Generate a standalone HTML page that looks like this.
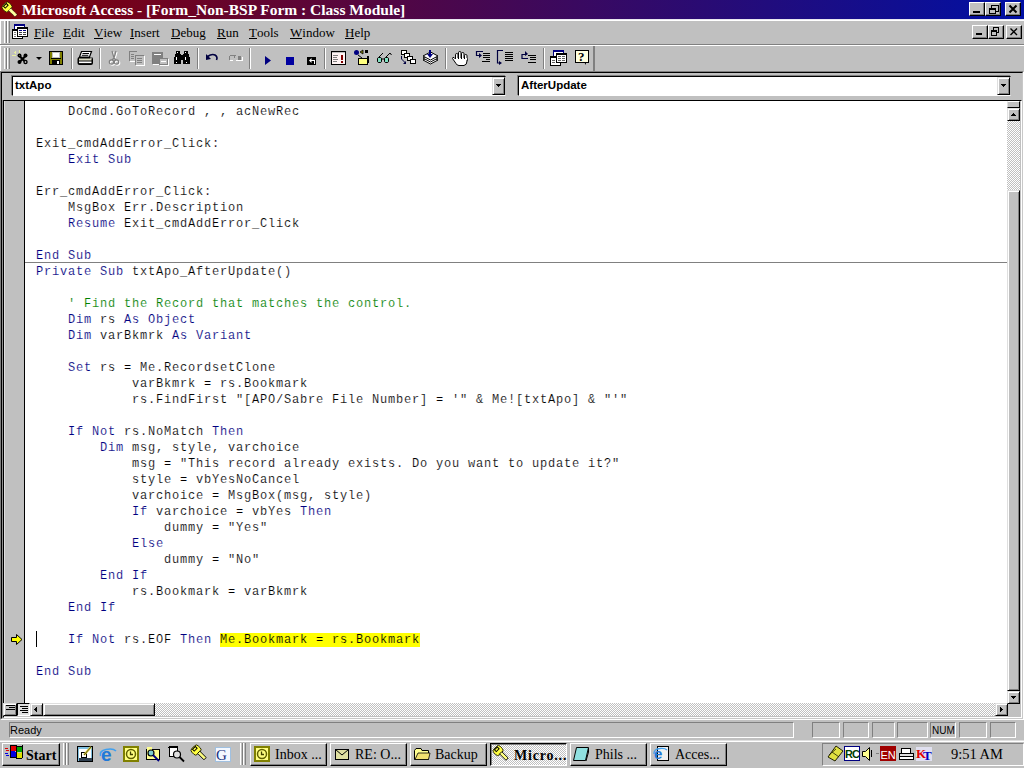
<!DOCTYPE html>
<html><head><meta charset="utf-8">
<style>
*{margin:0;padding:0;box-sizing:border-box}
html,body{width:1024px;height:768px;overflow:hidden;background:#c0c0c0;position:relative;font-family:"Liberation Serif",serif}
.a{position:absolute}
#title{left:0;top:0;width:1024px;height:19px;background:linear-gradient(90deg,#840008 0%,#0010a4 100%)}
#ttext{left:22px;top:1px;color:#fff;font-weight:bold;font-size:15.5px;white-space:nowrap;line-height:17px}
.tb{width:16px;height:14px;background:#c0c0c0;border-top:1px solid #fff;border-left:1px solid #fff;border-right:1px solid #000;border-bottom:1px solid #000;box-shadow:inset -1px -1px 0 #808080}
#menubar{left:0;top:19px;width:1024px;height:27px;border-top:1px solid #e8e8f0;border-bottom:1px solid #fff;box-shadow:inset 0 1px 0 #fff}
#menubar .line{left:0;top:24px;width:1024px;height:1px;background:#808080}
.menu{top:4px;font-size:13px;line-height:15px;color:#000;white-space:nowrap;margin-top:1px}
.menu u{text-decoration:none;border-bottom:1px solid #000;display:inline-block;line-height:11px}
#toolbar{left:0;top:46px;width:595px;height:25px;border-left:1px solid #fff;border-right:1px solid #808080}
.sep{top:3px;width:2px;height:20px;border-left:1px solid #808080;border-right:1px solid #fff}
.grip{top:2px;width:3px;height:21px;border-left:1px solid #fff;border-right:1px solid #808080}
#mdi{left:0;top:71px;width:1024px;height:649px;border-top:1px solid #808080;border-left:1px solid #808080;border-right:1px solid #fff;border-bottom:1px solid #fff}
.combo{height:20px;background:#fff;border-top:1px solid #000;border-left:1px solid #000;border-bottom:1px solid #fff;border-right:1px solid #c0c0c0;box-shadow:-1px -1px 0 #808080}
.combo span{position:absolute;left:2px;top:2px;font-family:"Liberation Sans",sans-serif;font-weight:bold;font-size:11.5px;line-height:13px}
.ddb{top:0px;width:13px;height:18px;background:#c0c0c0;border-top:1px solid #dfdfdf;border-left:1px solid #dfdfdf;border-right:1px solid #000;border-bottom:1px solid #000;box-shadow:inset 1px 1px 0 #fff,inset -1px -1px 0 #808080}
.ddb:after{content:"";position:absolute;left:3px;top:6px;width:1px;height:1px;background:#000;box-shadow:1px 0 #000,2px 0 #000,3px 0 #000,4px 0 #000,1px 1px #000,2px 1px #000,3px 1px #000,2px 2px #000}
.ad{position:absolute;width:1px;height:1px;background:#000;box-shadow:1px 0 #000,2px 0 #000,3px 0 #000,4px 0 #000,1px 1px #000,2px 1px #000,3px 1px #000,2px 2px #000}
.au{position:absolute;width:1px;height:1px;background:#000;box-shadow:1px 0 #000,2px 0 #000,3px 0 #000,4px 0 #000,1px -1px #000,2px -1px #000,3px -1px #000,2px -2px #000}
.al{position:absolute;width:1px;height:1px;background:#000;box-shadow:1px -1px #000,1px 0 #000,1px 1px #000,2px -2px #000,2px -1px #000,2px 0 #000,2px 1px #000,2px 2px #000}
.ar{position:absolute;width:1px;height:1px;background:#000;box-shadow:0 -2px #000,0 -1px #000,0 1px #000,0 2px #000,1px -1px #000,1px 0 #000,1px 1px #000,2px 0 #000}
#code{left:3px;top:100px;width:1019px;height:618px;background:#fff;border-top:1px solid #000;border-left:1px solid #000;border-right:1px solid #fff;border-bottom:1px solid #fff;box-shadow:inset -1px -1px 0 #c0c0c0}
#margin{left:4px;top:101px;width:21px;height:602px;background:#c0c0c0;border-left:1px solid #dfdfdf;border-right:1px solid #000}
#lines{left:36px;top:104px;font-family:"Liberation Mono",monospace;font-size:12px;letter-spacing:0.8px;line-height:16px;white-space:pre;color:#000}
.k{color:#000080}.c{color:#008000}.hl{background:#ffff00;-webkit-text-stroke:0.15px #ffff00}
#lines{-webkit-text-stroke:0.15px #fff}
.dither{background-color:#fff;background-image:linear-gradient(45deg,#c0c0c0 25%,transparent 25%,transparent 75%,#c0c0c0 75%),linear-gradient(45deg,#c0c0c0 25%,transparent 25%,transparent 75%,#c0c0c0 75%);background-size:2px 2px;background-position:0 0,1px 1px}
.sbtn{background:#c0c0c0;border-top:1px solid #dfdfdf;border-left:1px solid #dfdfdf;border-right:1px solid #000;border-bottom:1px solid #000;box-shadow:inset 1px 1px 0 #fff,inset -1px -1px 0 #808080}
.btn{background:#c0c0c0;border-top:1px solid #fff;border-left:1px solid #fff;border-right:1px solid #000;border-bottom:1px solid #000;box-shadow:inset -1px -1px 0 #808080}
.sp{height:16px;top:722px;border-top:1px solid #808080;border-left:1px solid #808080;border-right:1px solid #fff;border-bottom:1px solid #fff}
.sp span{position:absolute;left:0px;top:1px;font-family:"Liberation Sans",sans-serif;font-size:11px;line-height:13px}
#taskbar{left:0;top:740px;width:1024px;height:28px;border-top:1px solid #dfdfdf;box-shadow:inset 0 1px 0 #fff}
.task{top:743px;width:77px;height:23px}
.task span{position:absolute;left:24px;top:3px;font-size:14px;line-height:16px;white-space:nowrap}
.task svg{position:absolute;left:4px;top:2px}
</style></head><body>
<!-- title bar -->
<div id="title" class="a"></div>
<svg class="a" style="left:1px;top:1px" width="18" height="17"><g transform="translate(0,0.5) rotate(-45 8.5 8)"><rect x="4" y="0.5" width="9" height="8" rx="2.5" fill="#ffff40" stroke="#202000" stroke-width="0.8"/><rect x="6.5" y="1.5" width="4" height="2.5" fill="none" stroke="#000" stroke-width="1"/><rect x="7.2" y="8" width="3.2" height="9" fill="#ffffa0" stroke="#000" stroke-width="0.8" stroke-dasharray="1 1"/></g></svg>
<div id="ttext" class="a">Microsoft Access - [Form_Non-BSP Form : Class Module]</div>
<div class="a tb" style="left:969px;top:2px"></div>
<div class="a tb" style="left:985px;top:2px"></div>
<div class="a tb" style="left:1005px;top:2px"></div>
<svg class="a" style="left:960px;top:0;z-index:5" width="64" height="44" shape-rendering="crispEdges">
<rect x="13" y="11" width="7" height="2" fill="#000"/>
<rect x="31" y="5" width="7" height="6" fill="none" stroke="#000" stroke-width="1" transform="translate(0.5,0.5)"/><rect x="31" y="5" width="7" height="1" fill="#000"/>
<rect x="29" y="8" width="7" height="6" fill="#c0c0c0"/><rect x="29.5" y="8.5" width="6" height="5" fill="none" stroke="#000" stroke-width="1"/><rect x="29" y="8" width="7" height="2" fill="#000"/>
<path d="M49.5 5.5 L56.5 12.5 M56.5 5.5 L49.5 12.5" stroke="#000" stroke-width="2" shape-rendering="auto"/>
<rect x="16" y="33" width="6" height="2" fill="#000"/>
<rect x="33.5" y="27.5" width="5" height="5" fill="none" stroke="#000" stroke-width="1"/><rect x="33" y="27" width="6" height="1" fill="#000"/>
<rect x="31" y="30" width="6" height="6" fill="#c0c0c0"/><rect x="31.5" y="30.5" width="5" height="5" fill="none" stroke="#000" stroke-width="1"/><rect x="31" y="30" width="6" height="2" fill="#000"/>
<path d="M50.5 28.5 L57 35 M57 28.5 L50.5 35" stroke="#000" stroke-width="1.4" shape-rendering="auto"/>
</svg>

<!-- menubar -->
<div id="menubar" class="a"><div class="a line"></div></div>
<div class="a menu" style="left:34px;top:24px"><u>F</u>ile</div>
<div class="a menu" style="left:63px;top:24px"><u>E</u>dit</div>
<div class="a menu" style="left:94px;top:24px"><u>V</u>iew</div>
<div class="a menu" style="left:130px;top:24px"><u>I</u>nsert</div>
<div class="a menu" style="left:171px;top:24px"><u>D</u>ebug</div>
<div class="a menu" style="left:217px;top:24px"><u>R</u>un</div>
<div class="a menu" style="left:249px;top:24px"><u>T</u>ools</div>
<div class="a menu" style="left:290px;top:24px"><u>W</u>indow</div>
<div class="a menu" style="left:345px;top:24px"><u>H</u>elp</div>
<div class="a tb" style="left:972px;top:25px"></div>
<div class="a tb" style="left:988px;top:25px"></div>
<div class="a tb" style="left:1006px;top:25px"></div>

<!-- toolbar -->
<div id="toolbar" class="a"></div>
<!--TBICONS-->
<svg class="a" style="left:0;top:0" width="1024" height="80" shape-rendering="crispEdges">
<!-- menubar grip -->
<rect x="0" y="20" width="1" height="24" fill="#fff"/>
<rect x="4" y="21" width="1" height="22" fill="#fff"/><rect x="6" y="21" width="1" height="22" fill="#808080"/>
<rect x="7" y="21" width="1" height="22" fill="#fff"/><rect x="9" y="21" width="1" height="22" fill="#808080"/>
<!-- menubar icon (windows) -->
<rect x="14" y="24" width="11" height="8" fill="#000080"/><rect x="15" y="26" width="9" height="5" fill="#fff"/>
<rect x="12" y="29" width="11" height="10" fill="#000"/><rect x="13" y="31" width="9" height="7" fill="#fff"/>
<rect x="14" y="32" width="2" height="1" fill="#808080"/><rect x="14" y="34" width="2" height="1" fill="#808080"/><rect x="14" y="36" width="2" height="1" fill="#808080"/>
<rect x="17" y="27" width="11" height="10" fill="#000"/><rect x="18" y="29" width="9" height="7" fill="#fff"/>
<rect x="19" y="30" width="3" height="1" fill="#000080"/><rect x="23" y="30" width="3" height="1" fill="#000080"/>
<rect x="19" y="32" width="3" height="1" fill="#404040"/><rect x="23" y="32" width="3" height="1" fill="#404040"/>
<rect x="19" y="34" width="3" height="1" fill="#404040"/><rect x="23" y="34" width="3" height="1" fill="#404040"/>
<!-- toolbar grip -->
<rect x="0" y="46" width="1" height="25" fill="#fff"/>
<rect x="4" y="48" width="1" height="21" fill="#fff"/><rect x="6" y="48" width="1" height="21" fill="#808080"/>
<rect x="7" y="48" width="1" height="21" fill="#fff"/><rect x="9" y="48" width="1" height="21" fill="#808080"/>
<!-- separators -->
<rect x="71" y="48" width="1" height="21" fill="#808080"/><rect x="72" y="48" width="1" height="21" fill="#fff"/>
<rect x="99" y="48" width="1" height="21" fill="#808080"/><rect x="100" y="48" width="1" height="21" fill="#fff"/>
<rect x="197" y="48" width="1" height="21" fill="#808080"/><rect x="198" y="48" width="1" height="21" fill="#fff"/>
<rect x="249" y="48" width="1" height="21" fill="#808080"/><rect x="250" y="48" width="1" height="21" fill="#fff"/>
<rect x="324" y="48" width="1" height="21" fill="#808080"/><rect x="325" y="48" width="1" height="21" fill="#fff"/>
<rect x="445" y="48" width="1" height="21" fill="#808080"/><rect x="446" y="48" width="1" height="21" fill="#fff"/>
<rect x="543" y="48" width="1" height="21" fill="#808080"/><rect x="544" y="48" width="1" height="21" fill="#fff"/>
<rect x="593" y="46" width="1" height="25" fill="#808080"/>
<!-- 1 access tools -->
<g fill="#e8f0a0"><rect x="14" y="52" width="2" height="1"/><rect x="15" y="51" width="1" height="3"/><rect x="19" y="50" width="1" height="3"/><rect x="12" y="55" width="4" height="1"/></g>
<g shape-rendering="auto"><path d="M19 55.5 L26 62.5 M26 55.5 L19 62.5" stroke="#000" stroke-width="2.2"/>
<circle cx="19.5" cy="55.5" r="2" fill="#000"/><circle cx="25.5" cy="55.5" r="2" fill="#000"/><circle cx="19.5" cy="62" r="2" fill="#000"/><circle cx="25.5" cy="62" r="2.2" fill="#000"/>
<circle cx="25.5" cy="62" r="0.8" fill="#fff"/><circle cx="19.5" cy="55.5" r="0.6" fill="#606060"/></g>
<path d="M36 57h6l-3 3z" fill="#000" shape-rendering="auto"/>
<!-- 2 save -->
<rect x="49" y="51" width="14" height="14" fill="#000"/><rect x="50" y="52" width="12" height="12" fill="#808000"/>
<rect x="52" y="52" width="8" height="6" fill="#c0c0c0"/><rect x="53" y="53" width="6" height="4" fill="#fff"/>
<rect x="52" y="60" width="8" height="4" fill="#000"/><rect x="57" y="61" width="2" height="3" fill="#fff"/>
<rect x="51" y="58" width="10" height="1" fill="#000"/>
<!-- 3 print -->
<g shape-rendering="auto"><path d="M81.5 51.5 L91.5 51.5 L89.5 57 L79.5 57 Z" fill="#fff" stroke="#000" stroke-width="1.2"/>
<path d="M82.5 53.5 h6.5 M81.8 55.3 h6.5" stroke="#000" stroke-width="1"/>
<rect x="77.5" y="57" width="15.5" height="8" rx="2" fill="#000"/>
<rect x="79" y="58.5" width="12.5" height="2" fill="#d8d8c0"/><rect x="79" y="61.5" width="12.5" height="1.6" fill="#fff"/>
<circle cx="91" cy="58" r="0.7" fill="#fff"/></g>
<!-- 5 cut disabled -->
<g shape-rendering="auto" fill="none">
<path d="M112 51 L114 58 M116 51 L114 58" stroke="#fff" stroke-width="1.2" transform="translate(1,1)"/>
<circle cx="111.5" cy="62" r="2.2" stroke="#fff" stroke-width="1.2" transform="translate(1,1)"/><circle cx="116.5" cy="62" r="2.2" stroke="#fff" stroke-width="1.2" transform="translate(1,1)"/>
<path d="M112 51 L114 58 M116 51 L114 58 M114 58 L112 60 M114 58 L116 60" stroke="#808080" stroke-width="1.2"/>
<circle cx="111.5" cy="62" r="2.2" stroke="#808080" stroke-width="1.2"/><circle cx="116.5" cy="62" r="2.2" stroke="#808080" stroke-width="1.2"/>
</g>
<!-- 6 copy disabled -->
<g fill="#808080"><rect x="129" y="51" width="8" height="1"/><rect x="129" y="51" width="1" height="10"/><rect x="131" y="54" width="3" height="1"/><rect x="131" y="56" width="3" height="1"/><rect x="131" y="58" width="3" height="1"/>
<rect x="135" y="55" width="9" height="1"/><rect x="135" y="55" width="1" height="10"/><rect x="137" y="58" width="5" height="1"/><rect x="137" y="60" width="5" height="1"/><rect x="137" y="62" width="5" height="1"/></g>
<g fill="#fff"><rect x="130" y="61" width="5" height="1"/><rect x="136" y="65" width="9" height="1"/><rect x="144" y="56" width="1" height="9"/></g>
<!-- 7 paste disabled -->
<rect x="152" y="52" width="11" height="12" fill="#808080"/><rect x="154" y="54" width="7" height="1" fill="#fff"/>
<rect x="159" y="58" width="9" height="7" fill="#808080"/><rect x="160" y="59" width="7" height="5" fill="#c0c0c0"/><rect x="161" y="61" width="5" height="1" fill="#fff"/>
<rect x="153" y="64" width="6" height="1" fill="#fff"/><rect x="160" y="65" width="9" height="1" fill="#fff"/><rect x="168" y="59" width="1" height="6" fill="#fff"/>
<!-- 8 find -->
<g fill="#000"><rect x="176" y="51" width="4" height="3"/><rect x="184" y="51" width="4" height="3"/><rect x="175" y="54" width="6" height="4"/><rect x="183" y="54" width="6" height="4"/>
<rect x="174" y="57" width="7" height="7"/><rect x="183" y="57" width="7" height="7"/><rect x="181" y="55" width="2" height="5"/></g>
<g fill="#fff"><rect x="177" y="52" width="1" height="1"/><rect x="185" y="52" width="1" height="1"/><rect x="176" y="57" width="1" height="3"/><rect x="185" y="57" width="1" height="3"/><rect x="176" y="62" width="1" height="1"/><rect x="186" y="62" width="1" height="1"/></g>
<!-- 10 undo -->
<path d="M207.5 56.5 Q212 53.5 215 55 Q218 57 216.5 60" fill="none" stroke="#000040" stroke-width="1.6" shape-rendering="auto"/>
<path d="M206 54 L206 60 L211 59 Z" fill="#000040" shape-rendering="auto"/>
<!-- 11 redo disabled -->
<g fill="#808080"><rect x="230" y="55" width="6" height="1"/><rect x="229" y="56" width="1" height="4"/><rect x="238" y="56" width="3" height="4"/><rect x="234" y="56" width="1" height="2"/></g>
<g fill="#fff"><rect x="230" y="60" width="3" height="1"/><rect x="236" y="60" width="6" height="1"/><rect x="242" y="57" width="1" height="4"/></g>
<!-- 13 run -->
<path d="M265 56 L271 60.5 L265 65 Z" fill="#000080" shape-rendering="auto"/>
<!-- 14 stop -->
<rect x="286" y="57" width="8" height="8" fill="#0000a0"/>
<!-- 15 reset -->
<rect x="307" y="57" width="9" height="8" fill="#000"/>
<path d="M309.5 60.5 h4.5 v3" fill="none" stroke="#fff" stroke-width="1"/><path d="M309 60.5 L311.5 58 L311.5 63 Z" fill="#fff" shape-rendering="auto"/>
<!-- 17 immediate -->
<rect x="331" y="51" width="15" height="14" fill="#000"/><rect x="332" y="53" width="13" height="11" fill="#fff4f4"/><rect x="332" y="52" width="13" height="1" fill="#c0c0c0"/>
<g fill="#808080"><rect x="333" y="55" width="5" height="1"/><rect x="333" y="57" width="4" height="1"/><rect x="333" y="59" width="5" height="1"/><rect x="333" y="61" width="4" height="1"/></g>
<rect x="341" y="55" width="2" height="5" fill="#800000"/><rect x="341" y="61" width="2" height="2" fill="#800000"/>
<!-- 18 object browser -->
<circle cx="356.5" cy="52.5" r="2.5" fill="#000080" shape-rendering="auto"/>
<rect x="365" y="50" width="3" height="3" fill="#000"/>
<path d="M360 52 L363 50 L363 54 Z" fill="#808000" stroke="#000" stroke-width="0.8" shape-rendering="auto"/>
<path d="M358 55 L362 58" stroke="#000" stroke-width="1" shape-rendering="auto"/>
<rect x="358" y="58" width="10" height="7" fill="#000"/><rect x="359" y="59" width="8" height="5" fill="#ffff80"/>
<rect x="367" y="56" width="2" height="7" fill="#000"/>
<!-- 19 quick watch glasses -->
<g fill="none" stroke="#000" stroke-width="1" shape-rendering="auto"><rect x="377.5" y="57.5" width="4" height="5" rx="1.5"/><rect x="384.5" y="57.5" width="4" height="5" rx="1.5"/><path d="M381.5 59 L384.5 59 M379 57 L383 53 M386 57 L390 53 L391.5 55"/></g>
<rect x="378" y="58" width="3" height="4" fill="#80e0c0"/><rect x="385" y="58" width="3" height="4" fill="#80e0c0"/>
<!-- 20 call stack -->
<rect x="401" y="50" width="6" height="5" fill="#000"/><rect x="402" y="51" width="4" height="3" fill="#fff"/>
<rect x="404" y="53" width="6" height="5" fill="#000"/><rect x="405" y="54" width="4" height="3" fill="#fff"/>
<rect x="407" y="56" width="6" height="5" fill="#000"/><rect x="408" y="57" width="4" height="3" fill="#fff"/>
<rect x="410" y="59" width="6" height="5" fill="#000"/><rect x="411" y="60" width="4" height="3" fill="#fff"/>
<path d="M401.5 56 v3 l4 4" fill="none" stroke="#000040" stroke-width="1" shape-rendering="auto"/><path d="M403 64 h3 v-3z" fill="#000040" shape-rendering="auto"/>
<!-- 21 compile -->
<g shape-rendering="auto"><path d="M423 60 L430.5 56 L438 60 L430.5 64 Z" fill="#fff" stroke="#000" stroke-width="1"/><path d="M423 58 L430.5 54 L438 58 L430.5 62 Z" fill="#fff" stroke="#000" stroke-width="1"/><path d="M423 56 L430.5 52 L438 56 L430.5 60 Z" fill="#fff" stroke="#000" stroke-width="1"/>
<path d="M430 50 v5" stroke="#000080" stroke-width="2"/><path d="M427 54 L433 54 L430 58 Z" fill="#000080"/></g>
<!-- 23 hand -->
<g shape-rendering="auto" fill="#fff" stroke="#000" stroke-width="1">
<rect x="455.5" y="53.5" width="2.5" height="8" rx="1.2"/>
<rect x="458.5" y="51.5" width="2.5" height="9" rx="1.2"/>
<rect x="461.5" y="52.5" width="2.5" height="8" rx="1.2"/>
<rect x="464.5" y="54.5" width="2.5" height="7" rx="1.2"/>
<path d="M455.5 59 L454 57.5 Q452.5 57 452.5 58.5 L456 63.5 Q457 65.5 459 65.5 L464 65.5 Q467 65 467 61 L467 58.5 L455.5 58.5 Z"/>
</g>
<rect x="456" y="58" width="1.5" height="2" fill="#fff"/><rect x="459" y="58" width="1.5" height="2" fill="#fff"/><rect x="462" y="58" width="1.5" height="2" fill="#fff"/><rect x="465" y="58" width="1.5" height="2" fill="#fff"/>
<!-- 24 step into -->
<g fill="#000"><rect x="483" y="53" width="7" height="1"/><rect x="483" y="55" width="7" height="1"/><rect x="483" y="57" width="7" height="1"/><rect x="482" y="61" width="8" height="1"/><rect x="486" y="59" width="4" height="1"/></g>
<path d="M483 51.5 h-6.5 v4 h3" fill="none" stroke="#000040" stroke-width="1.2" shape-rendering="auto"/><path d="M479 53 L482 55.5 L479 58 Z" fill="#000040" shape-rendering="auto"/>
<!-- 25 step over -->
<g fill="#000"><rect x="505" y="52" width="8" height="1"/><rect x="505" y="54" width="8" height="1"/><rect x="505" y="56" width="8" height="1"/><rect x="505" y="58" width="8" height="1"/><rect x="505" y="60" width="8" height="1"/></g>
<path d="M503 50.5 h-5.5 v12.5 h2" fill="none" stroke="#000040" stroke-width="1.2" shape-rendering="auto"/><path d="M499 61 L502 63 L499 65 Z" fill="#000040" shape-rendering="auto"/>
<!-- 26 step out -->
<g fill="#000"><rect x="528" y="55" width="8" height="1"/><rect x="530" y="57" width="6" height="1"/><rect x="530" y="59" width="6" height="1"/><rect x="528" y="62" width="8" height="1"/></g>
<path d="M528 58.5 h-6 v-4 h4" fill="none" stroke="#000040" stroke-width="1.2" shape-rendering="auto"/><path d="M525 51 L528 54 L525 56 Z" fill="#000040" shape-rendering="auto"/>
<!-- 28 project explorer -->
<rect x="553" y="50" width="11" height="8" fill="#000080"/><rect x="554" y="52" width="9" height="5" fill="#fff"/>
<rect x="550" y="56" width="11" height="10" fill="#000"/><rect x="551" y="58" width="9" height="7" fill="#fff"/>
<rect x="556" y="53" width="11" height="10" fill="#000"/><rect x="557" y="55" width="9" height="7" fill="#fff"/>
<g fill="#606060"><rect x="558" y="56" width="3" height="1"/><rect x="562" y="56" width="3" height="1"/><rect x="558" y="58" width="3" height="1"/><rect x="562" y="58" width="3" height="1"/><rect x="558" y="60" width="3" height="1"/><rect x="562" y="60" width="3" height="1"/><rect x="552" y="60" width="3" height="1"/><rect x="552" y="62" width="3" height="1"/></g>
<!-- 29 help -->
<rect x="575" y="50" width="14" height="13" fill="#000"/><rect x="576" y="51" width="12" height="11" fill="#ffffe0"/><path d="M584 62 L586 65 L586 62 Z" fill="#000" shape-rendering="auto"/>
<text x="578" y="61" font-family="Liberation Serif" font-weight="bold" font-size="13" fill="#000">?</text>
</svg>

<!--/TBICONS-->

<!-- mdi child -->
<div id="mdi" class="a"></div>
<div class="a" style="left:1px;top:72px;width:1022px;height:647px;border-top:1px solid #000;border-left:1px solid #000;border-right:1px solid #c8c8c8;border-bottom:1px solid #c8c8c8"></div>
<div class="a combo" style="left:12px;top:76px;width:494px"><span>txtApo</span><div class="a ddb" style="left:479px"></div></div>
<div class="a combo" style="left:518px;top:76px;width:493px"><span>AfterUpdate</span><div class="a ddb" style="left:478px"></div></div>

<div id="code" class="a"></div>
<div class="a" style="left:2px;top:100px;width:1px;height:618px;background:#909090"></div>
<div id="margin" class="a"></div>
<div class="a" style="left:25px;top:262px;width:982px;height:1px;background:#808080"></div>
<div id="lines" class="a"><span>    DoCmd.GoToRecord , , acNewRec</span>

<span>Exit_cmdAddError_Click:</span>
    <span class="k">Exit Sub</span>

Err_cmdAddError_Click:
    MsgBox Err.Description
    <span class="k">Resume</span> Exit_cmdAddError_Click

<span class="k">End Sub</span>
<span class="k">Private Sub</span> txtApo_AfterUpdate()

    <span class="c">' Find the Record that matches the control.</span>
    <span class="k">Dim</span> rs <span class="k">As Object</span>
    <span class="k">Dim</span> varBkmrk <span class="k">As Variant</span>

    <span class="k">Set</span> rs = Me.RecordsetClone
            varBkmrk = rs.Bookmark
            rs.FindFirst "[APO/Sabre File Number] = '" &amp; Me![txtApo] &amp; "'"

    <span class="k">If Not</span> rs.NoMatch <span class="k">Then</span>
        <span class="k">Dim</span> msg, style, varchoice
            msg = "This record already exists. Do you want to update it?"
            style = vbYesNoCancel
            varchoice = MsgBox(msg, style)
            <span class="k">If</span> varchoice = vbYes <span class="k">Then</span>
                dummy = "Yes"
            <span class="k">Else</span>
                dummy = "No"
        <span class="k">End If</span>
            rs.Bookmark = varBkmrk
    <span class="k">End If</span>

    <span class="k">If Not</span> rs.EOF <span class="k">Then</span> <span class="hl">Me.Bookmark = rs.Bookmark</span>

<span class="k">End Sub</span></div>

<!-- vertical scrollbar -->
<div class="a" style="left:1007px;top:101px;width:13px;height:7px;background:#c0c0c0;border-top:1px solid #fff;border-left:1px solid #dfdfdf;border-right:1px solid #000;border-bottom:1px solid #000"></div>
<div class="a sbtn" style="left:1007px;top:108px;width:13px;height:13px"><div class="au" style="left:3px;top:6px"></div></div>
<div class="a dither" style="left:1007px;top:121px;width:13px;height:69px"></div>
<div class="a sbtn" style="left:1007px;top:190px;width:13px;height:501px"></div>
<div class="a sbtn" style="left:1007px;top:691px;width:13px;height:13px"><div class="ad" style="left:3px;top:4px"></div></div>
<!-- h scrollbar -->
<div class="a sbtn" style="left:3px;top:703px;width:14px;height:13px"><svg class="a" style="left:0;top:0" width="12" height="11"><path d="M2 1.5h9M5 3.5h6M2 5.5h9" stroke="#000" stroke-width="1"/></svg></div>
<div class="a" style="left:17px;top:703px;width:13px;height:13px;background:#dfdfdf;border-top:1px solid #000;border-left:1px solid #000;border-right:1px solid #fff;border-bottom:1px solid #fff"><svg class="a" style="left:0;top:0" width="12" height="11"><path d="M2 2.5h8M4 4.5h6M2 6.5h8M4 8.5h6" stroke="#000" stroke-width="1"/></svg></div>
<div class="a sbtn" style="left:30px;top:703px;width:13px;height:13px"><div class="al" style="left:3px;top:5px"></div></div>
<div class="a sbtn" style="left:43px;top:703px;width:112px;height:13px"></div>
<div class="a dither" style="left:155px;top:703px;width:840px;height:13px"></div>
<div class="a sbtn" style="left:995px;top:703px;width:13px;height:13px"><div class="ar" style="left:4px;top:5px"></div></div>
<div class="a" style="left:1008px;top:704px;width:12px;height:12px;background:#c0c0c0"></div>
<!-- margin arrow + cursor -->
<svg class="a" style="left:10px;top:633px" width="14" height="13"><path d="M1.5 4.5h5v-3l5.5 5-5.5 5v-3h-5z" fill="#ffff00" stroke="#000" stroke-width="1"/></svg>
<div class="a" style="left:36px;top:631px;width:1px;height:16px;background:#000"></div>

<!-- status bar -->
<div class="a sp" style="left:9px;width:785px"><span>Ready</span></div>
<div class="a sp" style="left:812px;width:28px"></div>
<div class="a sp" style="left:843px;width:26px"></div>
<div class="a sp" style="left:872px;width:23px"></div>
<div class="a sp" style="left:897px;width:31px"></div>
<div class="a sp" style="left:930px;width:26px"><span style="left:1px;font-size:10px">NUM</span></div>
<div class="a sp" style="left:959px;width:28px"></div>
<div class="a sp" style="left:990px;width:26px"></div>

<!-- taskbar -->
<div id="taskbar" class="a"></div>
<div class="a btn" style="left:2px;top:743px;width:58px;height:23px"><span class="a" style="left:23px;top:4px;font-weight:bold;font-size:14px;line-height:16px">Start</span></div>
<div class="a task btn" style="left:250px"><span>Inbox ...</span></div>
<div class="a task btn" style="left:330px"><span>RE: O...</span></div>
<div class="a task btn" style="left:410px"><span>Backup</span></div>
<div class="a task dither" style="left:490px;border-top:1px solid #000;border-left:1px solid #000;border-right:1px solid #fff;border-bottom:1px solid #fff;box-shadow:inset 1px 1px 0 #808080"><span style="font-weight:bold;left:23px;top:4px;letter-spacing:0.8px">Micro...</span></div>
<div class="a task btn" style="left:570px"><span>Phils ...</span></div>
<div class="a task btn" style="left:650px"><span>Acces...</span></div>
<div class="a" style="left:822px;top:743px;width:202px;height:23px;border-top:1px solid #808080;border-left:1px solid #808080;border-right:1px solid #fff;border-bottom:1px solid #fff"></div>
<svg class="a" style="left:0;top:740px" width="1024" height="28">
<!-- windows logo in start -->
<g shape-rendering="crispEdges">
<path d="M10 6 Q13 4.5 16 6 L16 11.5 Q13 10 10 11.5 Z" fill="#e00000"/>
<path d="M16.5 6 Q19.5 7.5 22 6 L22 11.5 Q19.5 13 16.5 11.5 Z" fill="#00a000"/>
<path d="M10 12 Q13 10.5 16 12 L16 18 Q13 16.5 10 18 Z" fill="#0000e0"/>
<path d="M16.5 12 Q19.5 13.5 22 12 L22 18 Q19.5 19.5 16.5 18 Z" fill="#e0e000"/>
<path d="M10 6 Q13 4.5 16 6 L16 18 Q13 16.5 10 18 Z M16.5 6 Q19.5 7.5 22 6 L22 18 Q19.5 19.5 16.5 18 Z" fill="none" stroke="#000" stroke-width="1"/>
<g fill="#e00000"><rect x="5" y="8" width="3" height="1"/><rect x="6" y="10" width="3" height="1"/></g>
<g fill="#0000e0"><rect x="5" y="13" width="3" height="1"/><rect x="6" y="15" width="3" height="1"/></g>
</g>
<!-- grips -->
<g shape-rendering="crispEdges">
<rect x="63" y="3" width="1" height="22" fill="#fff"/><rect x="65" y="3" width="1" height="22" fill="#808080"/>
<rect x="66" y="3" width="1" height="22" fill="#fff"/><rect x="68" y="3" width="1" height="22" fill="#808080"/>
<rect x="240" y="3" width="1" height="22" fill="#fff"/><rect x="242" y="3" width="1" height="22" fill="#808080"/>
<rect x="243" y="3" width="1" height="22" fill="#fff"/><rect x="245" y="3" width="1" height="22" fill="#808080"/>
</g>
<!-- ql1 desktop -->
<g shape-rendering="crispEdges"><rect x="77" y="6" width="16" height="16" fill="#000"/><rect x="78" y="7" width="14" height="14" fill="#80c0e0"/><rect x="79" y="9" width="12" height="11" fill="#fff"/><rect x="79" y="18" width="13" height="3" fill="#304050"/>
<rect x="81" y="12" width="6" height="6" fill="#000"/><rect x="82" y="13" width="4" height="4" fill="#fff"/></g>
<path d="M84 15 L91 7" stroke="#e0d040" stroke-width="2.2"/><path d="M84 15 L91 7" stroke="#000" stroke-width="0.6"/>
<!-- ql2 IE -->
<text x="101" y="21" font-family="Liberation Sans" font-weight="bold" font-size="19" fill="#2078d8">e</text>
<path d="M100.5 16 Q99 11 106 9.5 Q113 8 116 11" fill="none" stroke="#40a0f0" stroke-width="1.6"/>
<!-- ql3 outlook -->
<g shape-rendering="crispEdges"><rect x="123" y="6" width="16" height="16" fill="#808000"/><rect x="125" y="8" width="12" height="12" fill="#ffff80"/></g>
<circle cx="131" cy="14" r="4.5" fill="#ffff80" stroke="#606000" stroke-width="1.5"/><path d="M130.5 11.5 v3 h2.5" fill="none" stroke="#404000" stroke-width="1.3"/>
<!-- ql4 folder search -->
<g shape-rendering="crispEdges"><rect x="146" y="9" width="14" height="11" fill="#000"/><rect x="147" y="10" width="12" height="9" fill="#ffff90"/><rect x="147" y="7" width="5" height="3" fill="#ffff90"/></g>
<circle cx="151" cy="13" r="3" fill="#80d0d0" stroke="#000" stroke-width="1.2"/><path d="M153 15 L159 21" stroke="#000080" stroke-width="1.8"/>
<!-- ql5 find -->
<g shape-rendering="crispEdges"><rect x="169" y="6" width="9" height="11" fill="#000"/><rect x="170" y="8" width="7" height="8" fill="#fff"/><rect x="168" y="7" width="9" height="1" fill="#000"/></g>
<circle cx="177" cy="14.5" r="3.5" fill="#e0e0e0" stroke="#000" stroke-width="1.2"/><path d="M179.5 17 L184 21.5" stroke="#000" stroke-width="1.8"/>
<!-- ql6 key -->
<g transform="translate(190,4.5) rotate(-45 8.5 8)"><rect x="4" y="0.5" width="9" height="8" rx="2.5" fill="#ffff40" stroke="#202000" stroke-width="0.9"/><rect x="6.5" y="1.5" width="4" height="2.5" fill="none" stroke="#000" stroke-width="1"/><rect x="7.2" y="8" width="3.2" height="9" fill="#ffff80" stroke="#000" stroke-width="0.9"/></g>
<!-- ql7 G -->
<g shape-rendering="crispEdges"><rect x="215" y="7" width="16" height="15" fill="#a0c0e0"/><rect x="216" y="8" width="14" height="13" fill="#f4f8ff"/></g>
<text x="216" y="20" font-family="Liberation Serif" font-size="15" fill="#203080">G</text>
<!-- task 1 inbox icon -->
<g shape-rendering="crispEdges"><rect x="254" y="6" width="16" height="16" fill="#808000"/><rect x="256" y="8" width="12" height="12" fill="#ffff80"/></g>
<circle cx="262" cy="14" r="4.5" fill="#ffff80" stroke="#606000" stroke-width="1.5"/><path d="M261.5 11.5 v3 h2.5" fill="none" stroke="#404000" stroke-width="1.3"/>
<!-- task 2 envelope -->
<g shape-rendering="crispEdges"><rect x="335" y="9" width="14" height="11" fill="#000"/><rect x="336" y="10" width="12" height="9" fill="#e0e0a0"/></g>
<path d="M335.5 9.5 L342 15 L348.5 9.5" fill="none" stroke="#000" stroke-width="1"/>
<!-- task 3 folder -->
<path d="M414.5 10.5 L416 8.5 L421 8.5 L422 10.5 L428.5 10.5 L428.5 19.5 L414.5 19.5 Z" fill="#ffff90" stroke="#000" stroke-width="1"/>
<path d="M415 19.5 L418 13 L430 13 L428.5 19.5 Z" fill="#f0e070" stroke="#000" stroke-width="0.8"/>
<!-- task 4 key -->
<g transform="translate(492,5) rotate(-45 8.5 8)"><rect x="4" y="0.5" width="9" height="8" rx="2.5" fill="#ffff40" stroke="#202000" stroke-width="0.9"/><rect x="6.5" y="1.5" width="4" height="2.5" fill="none" stroke="#000" stroke-width="1"/><rect x="7.2" y="8" width="3.2" height="9" fill="#ffff80" stroke="#000" stroke-width="0.9"/></g>
<!-- task 5 book -->
<path d="M576.5 7.5 L588.5 7.5 L585.5 20.5 L573.5 20.5 Z" fill="#90e0e0" stroke="#000" stroke-width="1"/><path d="M588.5 8 L588.5 12 L586 21" fill="none" stroke="#000" stroke-width="1"/>
<!-- task 6 ie doc -->
<g shape-rendering="crispEdges"><rect x="657" y="6" width="12" height="15" fill="#000"/><rect x="658" y="7" width="10" height="13" fill="#f0f0f0"/></g>
<text x="654" y="19" font-family="Liberation Sans" font-weight="bold" font-size="15" fill="#2078d8">e</text><path d="M654 14 Q653.5 9 660 8.5 Q665 8 667 10" fill="none" stroke="#40a0f0" stroke-width="1.3"/>
<!-- tray -->
<path d="M828 17 L836 6 L843 11 L835 21 Z" fill="#e0e040" stroke="#202000" stroke-width="1"/><path d="M832 12 L839 17 M829 15 L836 9" stroke="#202000" stroke-width="0.8"/>
<g shape-rendering="crispEdges"><rect x="844" y="6" width="16" height="15" fill="#000080"/><rect x="845" y="7" width="14" height="13" fill="#fff"/></g>
<text x="845" y="18" font-family="Liberation Sans" font-weight="bold" font-size="11" fill="#004000" letter-spacing="-1">RC</text>
<path d="M862.5 11.5 h3 l4 -4 v13 l-4 -4 h-3 z" fill="#ffff90" stroke="#000" stroke-width="1"/><path d="M871.5 10 v7" stroke="#000" stroke-width="1"/>
<rect x="876" y="13" width="3" height="1" fill="#808080"/>
<g shape-rendering="crispEdges"><rect x="880" y="6" width="16" height="15" fill="#a00000"/></g>
<text x="880.5" y="18.5" font-family="Liberation Sans" font-size="11" fill="#fff">EN</text>
<g shape-rendering="crispEdges"><rect x="901" y="8" width="10" height="5" fill="#000"/><rect x="902" y="9" width="8" height="4" fill="#fff"/><rect x="899" y="13" width="15" height="7" fill="#000"/><rect x="900" y="14" width="13" height="2" fill="#e0e0e0"/><rect x="900" y="17" width="13" height="2" fill="#fff"/></g>
<g shape-rendering="crispEdges"><rect x="916" y="7" width="16" height="14" fill="#e0e0f0"/></g>
<text x="916" y="18" font-family="Liberation Serif" font-weight="bold" font-size="13" fill="#e00000">K</text><text x="923" y="20" font-family="Liberation Serif" font-weight="bold" font-size="13" fill="#0000c0">T</text>
</svg>

<div class="a" style="left:951px;top:746px;font-size:14.5px;line-height:16px;white-space:nowrap">9:51 AM</div>
</body></html>
